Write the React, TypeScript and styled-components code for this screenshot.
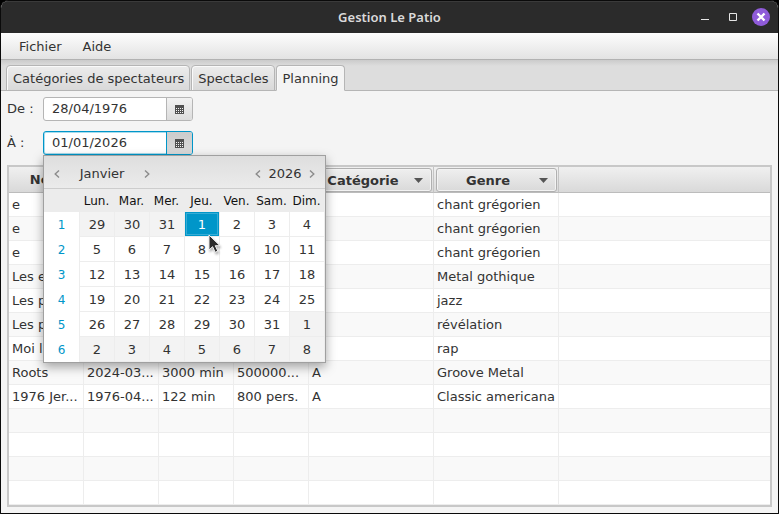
import React from "react";
import styled, { createGlobalStyle } from "styled-components";

const GlobalStyle = createGlobalStyle`
  *, *::before, *::after { box-sizing: border-box; }
  body { margin: 0; background: #000; }
  button, input { font: inherit; color: inherit; margin: 0; padding: 0; }
`;

const line = "#ededed";
const edge = "#b5b5b5";
const accent = "#0096c9";

const Window = styled.div`
  display: flex;
  flex-direction: column;
  min-height: 100vh;
  border: 1px solid #0a0a0a;
  border-radius: 8px 8px 0 0;
  overflow: hidden;
  background: #f4f4f4;
  color: #333;
  font: 13px/16px "DejaVu Sans", sans-serif;
`;

const TitleBar = styled.header`
  display: grid;
  grid-template-columns: 1fr auto 1fr;
  align-items: center;
  height: 32px;
  padding: 0 8px 1px;
  background: #2b2b2b;
  border-top: 1px solid #3a3a3a;
  color: #dadada;
`;

const Title = styled.h1`
  grid-column: 2;
  margin: 0;
  font: 600 13px/16px "Noto Sans", sans-serif;
`;

const WindowButtons = styled.div`
  display: flex;
  justify-content: flex-end;
  gap: 10px;
`;

const WindowButton = styled.button<{ $close?: boolean }>`
  display: grid;
  place-items: center;
  width: 18px;
  height: 18px;
  border: 0;
  border-radius: 50%;
  background: ${(p) => (p.$close ? "#8f5bd9" : "transparent")};
`;

const MenuBar = styled.nav`
  display: flex;
  align-items: center;
  gap: 1px;
  height: 27px;
  padding: 2px 8px 0;
  background: linear-gradient(#fdfdfd, #e3e3e3);
  border-bottom: 1px solid #b2b2b2;
`;

const MenuItem = styled.button`
  padding: 4px 10px;
  border: 0;
  background: none;
`;

const TabStrip = styled.div`
  display: flex;
  align-items: flex-end;
  gap: 1px;
  height: 31px;
  padding: 0 5px;
  background: linear-gradient(#cbcbcb, #dddddd 6px);
  box-shadow: inset 0 -1px #b5b5b5;
`;

const Tab = styled.button<{ $active?: boolean }>`
  height: 26px;
  padding: 1px 5px 0 6px;
  border: 1px solid ${edge};
  border-bottom-color: ${(p) => (p.$active ? "#f4f4f4" : edge)};
  border-radius: 4px 4px 0 0;
  background: ${(p) => (p.$active ? "#f4f4f4" : "linear-gradient(#ececec, #d9d9d9)")};
  box-shadow: inset 1px 1px #fafafa;
  white-space: nowrap;
`;

const Panel = styled.main`
  display: flex;
  flex: 1;
  flex-direction: column;
  gap: 10px;
  padding: 6px;
`;

const DateRow = styled.div`
  display: flex;
  align-items: center;
`;

const DateLabel = styled.label`
  width: 36px;
`;

const DatePicker = styled.div<{ $focused?: boolean }>`
  position: relative;
  display: flex;
  width: 150px;
  height: 24px;
  border: 1px solid ${(p) => (p.$focused ? accent : edge)};
  border-radius: 3px;
  background: #fff;
  box-shadow: ${(p) => (p.$focused ? `inset 0 0 0 1px ${accent}55` : "none")};
`;

const DateInput = styled.input`
  flex: 1;
  min-width: 0;
  padding: 0 8px;
  border: 0;
  outline: 0;
  background: transparent;
`;

const CalendarButton = styled.button<{ $focused?: boolean }>`
  display: grid;
  place-items: center;
  width: 26px;
  border: 0;
  border-left: 1px solid ${(p) => (p.$focused ? accent : edge)};
  border-radius: 0 2px 2px 0;
  background: ${(p) => (p.$focused ? "linear-gradient(#cccccc, #dadada)" : "linear-gradient(#f2f2f2, #dcdcdc)")};
`;

const Popup = styled.div`
  position: absolute;
  z-index: 1;
  top: 23px;
  left: -1px;
  width: 283px;
  border: 1px solid #a0a0a0;
  background: #fff;
  box-shadow: 0 4px 10px rgba(0, 0, 0, 0.35);
`;

const PopupHeader = styled.div`
  display: flex;
  justify-content: space-between;
  height: 33px;
  padding: 3px 4px 0;
  background: linear-gradient(#dedede, #ebebeb);
  border-bottom: 1px solid #cdcdcd;
`;

const Spinner = styled.div<{ $wide?: boolean }>`
  display: flex;
  align-items: center;
  justify-content: space-between;
  width: ${(p) => (p.$wide ? "108px" : "72px")};
`;

const ArrowButton = styled.button`
  display: grid;
  place-items: center;
  width: 18px;
  height: 20px;
  border: 0;
  background: none;
`;

const DayGrid = styled.table`
  width: 281px;
  table-layout: fixed;
  border-collapse: separate;
  border-spacing: 0;
  border-right: 1px solid ${line};
`;

const WeekdayCell = styled.th`
  height: 23px;
  padding: 0;
  background: #ececec;
  color: #111;
  font-size: 12px;
  font-weight: 400;
  text-align: center;
`;

const WeekCell = styled.th`
  height: 25px;
  padding: 0;
  color: ${accent};
  font-size: 12px;
  font-weight: 400;
  text-align: center;
`;

const DayCell = styled.td<{ $outside: boolean }>`
  height: 25px;
  padding: 0;
  border-left: 1px solid ${line};
  border-bottom: 1px solid ${line};
  background: ${(p) => (p.$outside ? "#f3f3f3" : "#fff")};
`;

const DayButton = styled.button<{ $selected: boolean }>`
  display: block;
  width: 100%;
  height: 24px;
  padding-top: 2px;
  border: 0;
  background: ${(p) => (p.$selected ? accent : "transparent")};
  box-shadow: ${(p) => (p.$selected ? `inset 0 0 0 1px ${accent}, inset 0 0 0 2px #35acd5` : "none")};
  color: ${(p) => (p.$selected ? "#fff" : "#333")};
`;

const Pointer = styled.svg`
  position: absolute;
  top: 78px;
  left: 164px;
  pointer-events: none;
  filter: drop-shadow(1px 2px 1px rgba(0, 0, 0, 0.3));
`;

const TableFrame = styled.div`
  flex: 1;
  border: 2px solid #c8c8c8;
  background: #fff;
`;

const DataTable = styled.table`
  width: 100%;
  table-layout: fixed;
  border-collapse: separate;
  border-spacing: 0;
`;

const Column = styled.col<{ $size?: number }>`
  width: ${(p) => (p.$size ? `${p.$size}px` : "auto")};
`;

const HeadCell = styled.th`
  height: 26px;
  padding: 1px 1px 0 2px;
  border-right: 1px solid #c4c4c4;
  border-bottom: 1px solid #bcbcbc;
  background: linear-gradient(#f0f0f0, #d9d9d9);
  font-weight: 700;
  text-align: center;
  &:last-child { border-right: 0; }
`;

const FilterButton = styled.button`
  display: flex;
  align-items: center;
  width: 100%;
  height: 24px;
  padding: 1px 8px 0 0;
  border: 1px solid #b0b0b0;
  border-radius: 3px;
  background: linear-gradient(#efefef, #d9d9d9);
  box-shadow: inset 0 0 0 1px #f3f3f3;
`;

const FilterText = styled.span`
  flex: 1;
`;

const Row = styled.tr`
  background: #fff;
  &:nth-child(even) { background: #f9f9f9; }
`;

const Cell = styled.td`
  height: 24px;
  padding: 0 0 0 3px;
  overflow: hidden;
  border-right: 1px solid ${line};
  border-bottom: 1px solid ${line};
  white-space: nowrap;
  &:last-child { border-right: 0; }
`;

const CalendarIcon = () => (
  <svg width="9" height="9" viewBox="0 0 9 9" shapeRendering="crispEdges" aria-hidden="true">
    <path d="M0 0h9v9H0z" fill="#505050" />
    {[3, 5, 7].map((y) => (
      <path key={y} d={`M1 ${y}.5h7`} stroke="#f4f4f4" strokeDasharray="1 1" />
    ))}
  </svg>
);

const Chevron = ({ right }: { right?: boolean }) => (
  <svg width="6" height="8" viewBox="0 0 6 8" fill="none" stroke="#8c8c8c" strokeWidth="1.4" aria-hidden="true">
    <path d={right ? "M1 .5 4.8 4 1 7.5" : "M5 .5 1.2 4 5 7.5"} />
  </svg>
);

const weekdays = ["Lun.", "Mar.", "Mer.", "Jeu.", "Ven.", "Sam.", "Dim."];
const firstDay = new Date(2025, 11, 29);
const weeks = Array.from({ length: 6 }, (_, w) =>
  Array.from({ length: 7 }, (_, d) => {
    const date = new Date(firstDay.getFullYear(), firstDay.getMonth(), firstDay.getDate() + w * 7 + d);
    return { day: date.getDate(), outside: date.getMonth() !== 0 };
  })
);

const columnSizes = [75, 75, 75, 75, 125, 125];
const plainHeads = ["Nom", "", "", ""];
const filterHeads = ["Catégorie", "Genre"];
const shows = [
  ["e", "", "", "", "", "chant grégorien"],
  ["e", "", "", "", "", "chant grégorien"],
  ["e", "", "", "", "", "chant grégorien"],
  ["Les e...", "", "", "", "", "Metal gothique"],
  ["Les p...", "", "", "", "", "jazz"],
  ["Les p...", "", "", "", "", "révélation"],
  ["Moi l...", "", "", "", "", "rap"],
  ["Roots", "2024-03...", "3000 min", "500000...", "A", "Groove Metal"],
  ["1976 Jer...", "1976-04...", "122 min", "800 pers.", "A", "Classic americana"],
];
const rows = [...shows, ...Array.from({ length: 4 }, () => ["", "", "", "", "", ""])];

const CalendarPopup = () => (
  <Popup>
    <PopupHeader>
      <Spinner $wide>
        <ArrowButton aria-label="Mois précédent"><Chevron /></ArrowButton>
        <span>Janvier</span>
        <ArrowButton aria-label="Mois suivant"><Chevron right /></ArrowButton>
      </Spinner>
      <Spinner>
        <ArrowButton aria-label="Année précédente"><Chevron /></ArrowButton>
        <span>2026</span>
        <ArrowButton aria-label="Année suivante"><Chevron right /></ArrowButton>
      </Spinner>
    </PopupHeader>
    <DayGrid>
      <thead>
        <tr>
          <WeekdayCell />
          {weekdays.map((name) => <WeekdayCell key={name} scope="col">{name}</WeekdayCell>)}
        </tr>
      </thead>
      <tbody>
        {weeks.map((week, w) => (
          <tr key={w}>
            <WeekCell scope="row">{w + 1}</WeekCell>
            {week.map(({ day, outside }) => (
              <DayCell key={day} $outside={outside}>
                <DayButton $selected={day === 1 && !outside}>{day}</DayButton>
              </DayCell>
            ))}
          </tr>
        ))}
      </tbody>
    </DayGrid>
    <Pointer width="14" height="20" viewBox="0 0 14 20" aria-hidden="true">
      <path d="M1 1v15l3.6-3.3 2.6 5.6 2.6-1.2-2.5-5.4H12z" fill="#2b2b2b" stroke="#f2f2f2" strokeWidth="1" />
    </Pointer>
  </Popup>
);

export default function App() {
  return (
    <>
      <GlobalStyle />
      <Window>
        <TitleBar>
          <Title>Gestion Le Patio</Title>
          <WindowButtons>
            <WindowButton aria-label="Réduire">
              <svg width="8" height="8"><path d="M0 6.5h8" stroke="#e6e6e6" /></svg>
            </WindowButton>
            <WindowButton aria-label="Agrandir">
              <svg width="8" height="8"><path d="M.5.5h7v7h-7z" fill="none" stroke="#e6e6e6" /></svg>
            </WindowButton>
            <WindowButton $close aria-label="Fermer">
              <svg width="10" height="10"><path d="M1.5 1.5l7 7M8.5 1.5l-7 7" stroke="#fff" strokeWidth="2.4" /></svg>
            </WindowButton>
          </WindowButtons>
        </TitleBar>
        <MenuBar>
          <MenuItem>Fichier</MenuItem>
          <MenuItem>Aide</MenuItem>
        </MenuBar>
        <TabStrip role="tablist">
          <Tab role="tab">Catégories de spectateurs</Tab>
          <Tab role="tab">Spectacles</Tab>
          <Tab role="tab" aria-selected $active>Planning</Tab>
        </TabStrip>
        <Panel>
          <DateRow>
            <DateLabel htmlFor="from">De :</DateLabel>
            <DatePicker>
              <DateInput id="from" defaultValue="28/04/1976" />
              <CalendarButton aria-label="Choisir la date de début"><CalendarIcon /></CalendarButton>
            </DatePicker>
          </DateRow>
          <DateRow>
            <DateLabel htmlFor="to">À :</DateLabel>
            <DatePicker $focused>
              <DateInput id="to" defaultValue="01/01/2026" />
              <CalendarButton $focused aria-label="Choisir la date de fin"><CalendarIcon /></CalendarButton>
              <CalendarPopup />
            </DatePicker>
          </DateRow>
          <TableFrame>
            <DataTable>
              <colgroup>
                {columnSizes.map((size, i) => <Column key={i} $size={size} />)}
                <Column />
              </colgroup>
              <thead>
                <tr>
                  {plainHeads.map((name, i) => <HeadCell key={i}>{name}</HeadCell>)}
                  {filterHeads.map((name) => (
                    <HeadCell key={name}>
                      <FilterButton>
                        <FilterText>{name}</FilterText>
                        <svg width="9" height="5" aria-hidden="true"><path d="M0 0h9L4.5 5z" fill="#555" /></svg>
                      </FilterButton>
                    </HeadCell>
                  ))}
                  <HeadCell />
                </tr>
              </thead>
              <tbody>
                {rows.map((cells, r) => (
                  <Row key={r}>
                    {cells.map((text, c) => <Cell key={c}>{text}</Cell>)}
                    <Cell />
                  </Row>
                ))}
              </tbody>
            </DataTable>
          </TableFrame>
        </Panel>
      </Window>
    </>
  );
}
